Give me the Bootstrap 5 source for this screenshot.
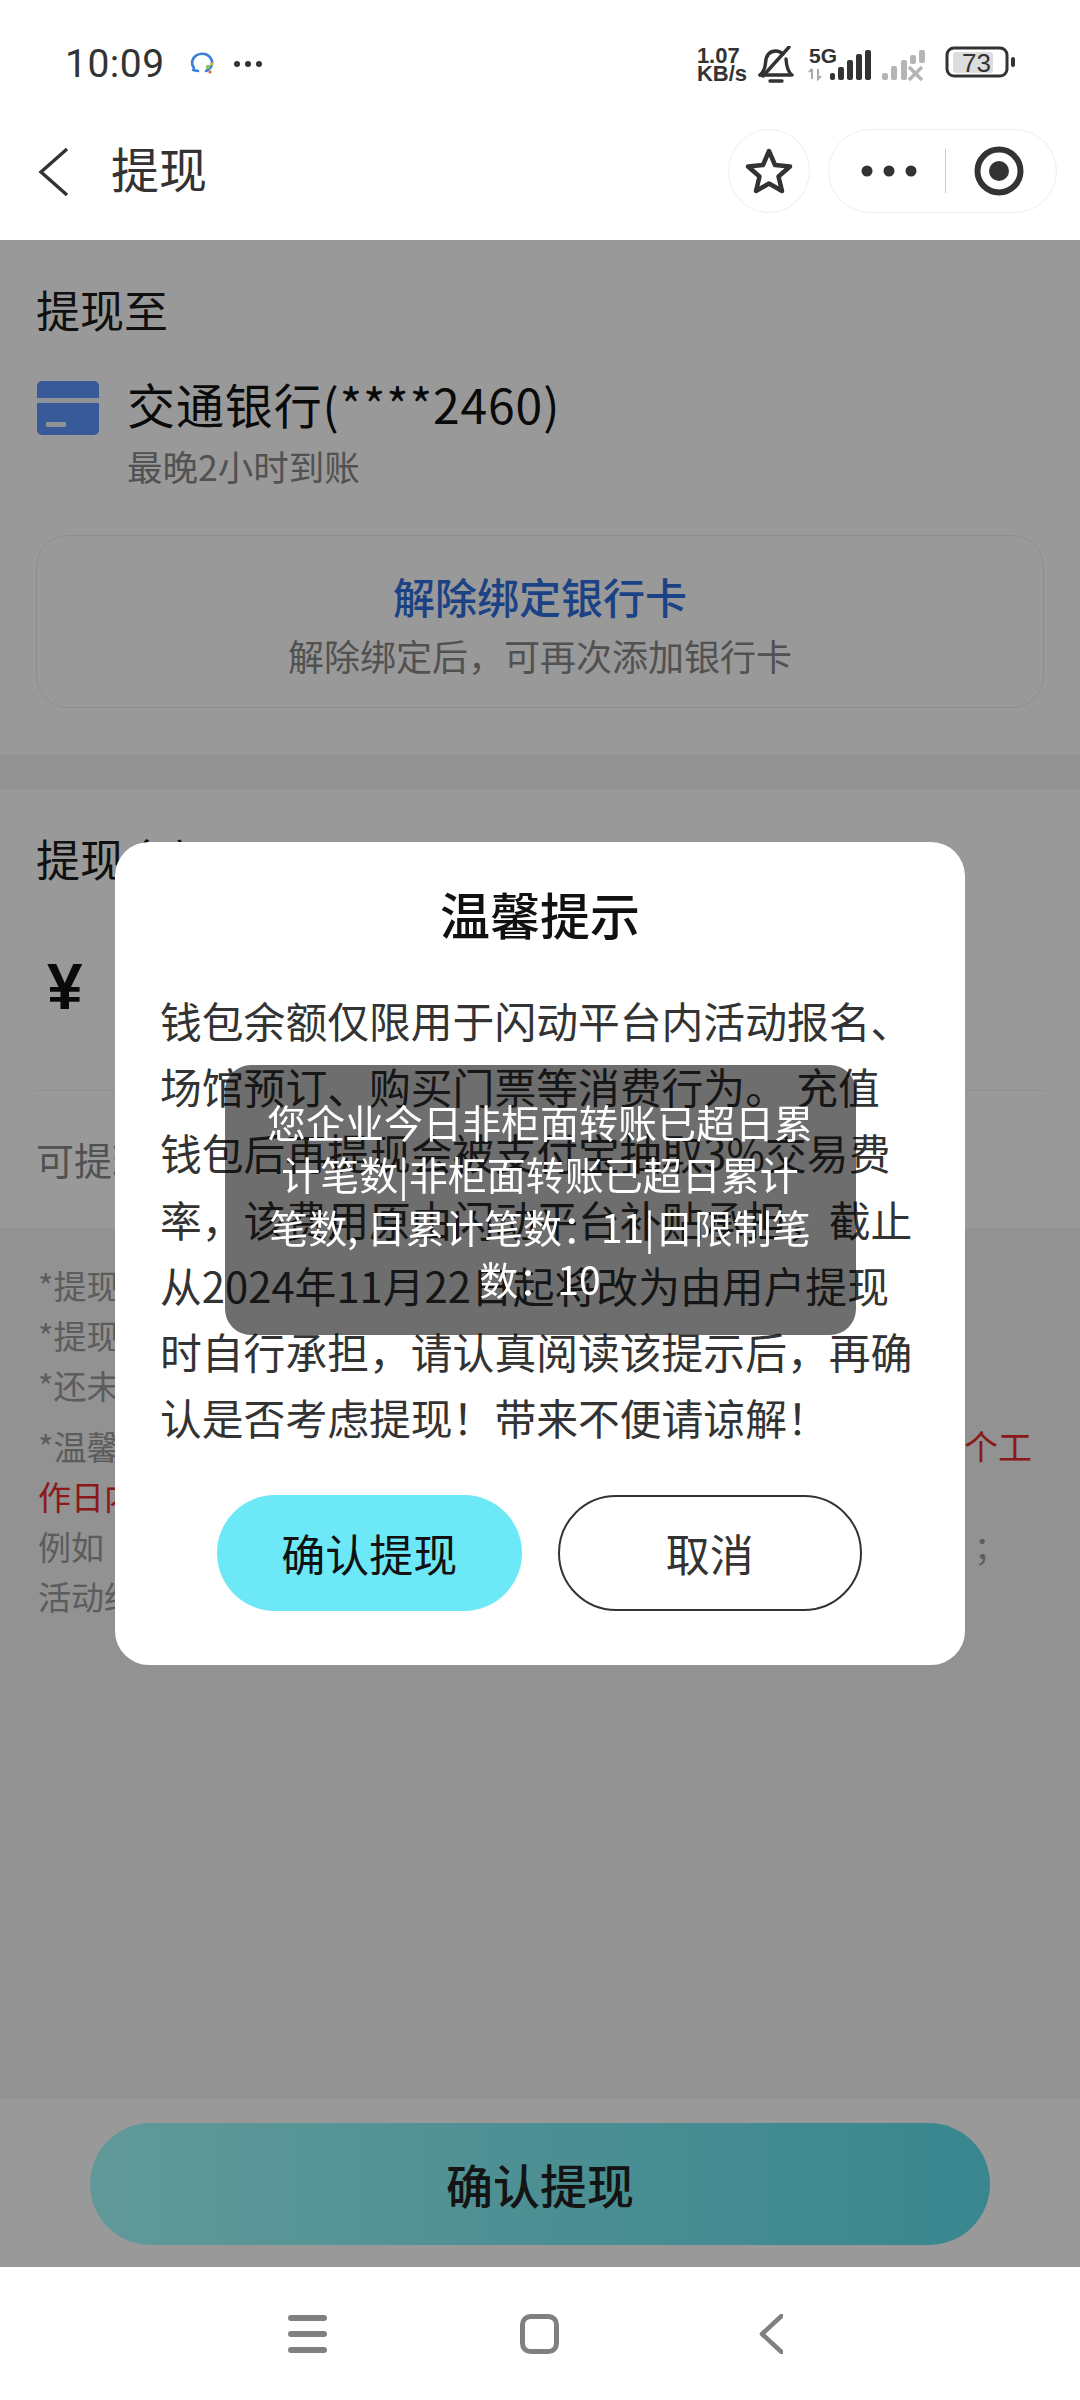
<!DOCTYPE html>
<html lang="zh-CN">
<head>
<meta charset="utf-8">
<link href="https://cdn.jsdelivr.net/npm/bootstrap@5.3.0/dist/css/bootstrap.min.css" rel="stylesheet">
<style>
html,body{margin:0;height:2400px;width:1080px;overflow:hidden;}
body{font-family:"Noto Sans CJK SC","Noto Sans",sans-serif;background:#fff;color:#333;}
.phone{width:1080px;height:2400px;position:relative;}
.status-row{height:80px;padding:46px 65px 0 65px;}
.clock{font-family:Roboto,"Noto Sans",sans-serif;font-size:39px;line-height:36px;color:#333;letter-spacing:.5px;}
.more-dots{margin-top:14px;}
.speed{font-family:"Liberation Sans",sans-serif;font-weight:700;font-size:22px;line-height:18px;color:#333;text-align:left;margin:1px 11px 0 0;}
.bell-mark{margin-right:14px;}
.net-a{margin-right:8px;}
.net-b{margin-right:20px;}
.svg-label{font-family:"Liberation Sans",sans-serif;}
.title-row{height:160px;padding:49px 23px 0 38px;align-items:flex-start;}
.back-mark{margin-top:18px;}
.page-title{font-size:48px;line-height:60px;margin:8px 0 0 42px;color:#333;}
.star-pill{width:82px;height:84px;border:1.5px solid #eee;border-radius:50%;margin-right:18px;}
.menu-pill{width:229px;height:84px;border:1.5px solid #eee;border-radius:42px;padding:0 32px 0 32px;}
.pill-rule{width:1px;height:44px;background:#ccc;}
.main-area{height:2027px;background:#f3f3f3;position:relative;}
.top-sec{background:#fff;height:515px;padding:40px 36px 0;}
.amount-sec{background:#fff;height:438px;padding:39px 36px 0;margin-top:35px;}
.sec-head{font-size:44px;line-height:58px;color:#1c1c1c;}
.bank-row{margin-top:35px;}
.card-mark{margin-top:8px;margin-right:27px;flex:none;}
.bank-name{font-size:48px;line-height:60px;color:#111;letter-spacing:.9px;}
.bank-sub{font-size:35.500px;line-height:48px;color:#888;margin-top:9px;}
.unbind{height:173px;border:1.5px solid #ececec;border-radius:32px;margin-top:45px;padding-top:30px;}
.unbind-a{font-size:42px;line-height:60px;font-weight:500;color:#2f6fe0;}
.unbind-b{font-size:36px;line-height:50px;color:#888;margin-top:4px;}
.yen{font-family:"Liberation Sans",sans-serif;font-size:64px;font-weight:700;line-height:70px;color:#111;margin:65px 0 0 11px;}
.amt-rule{height:1px;background:#eee;margin-top:68px;}
.avail{font-size:38px;line-height:54px;color:#888;margin-top:41px;}
.notes{padding:32px 38px 0;font-size:33px;line-height:50px;color:#9a9a9a;}
.note-gap{margin-top:11px;}
.red-note{color:#e62a2a;}
.red-end{margin-right:10px;font-size:34px;}
.semi-end{margin-right:35px;}
.foot-bar{position:absolute;left:0;right:0;bottom:0;height:169px;background:#fff;padding:25px 90px 0;}
.foot-btn{height:122px;border-radius:61px;background:linear-gradient(90deg,#a2ffff,#5ee0ee);font-size:47px;font-weight:500;color:#222;}
.veil{position:absolute;inset:0;background:rgba(0,0,0,.4);}
.dialog{width:850px;height:823px;background:#fff;border-radius:34px;padding:36px 45px 0;}
.dialog-title{font-size:50px;line-height:70px;font-weight:500;color:#111;text-align:center;}
.dialog-text{font-size:41.800px;line-height:66.200px;color:#333;margin-top:39px;white-space:nowrap;}
.dlg-actions{margin-top:45px;padding:0 58px 0 57px;gap:36px;}
.btn-ok,.btn-no{width:305px;height:116px;border-radius:58px;font-size:44px;}
.btn-ok{background:#6ce8f7;color:#111;}
.btn-no{background:#fff;border:2px solid #333;color:#333;}
.toast-layer{position:fixed;inset:0;pointer-events:none;}
.toast-box{width:631px;height:270px;border-radius:26px;background:rgba(0,0,0,.57);color:#fff;font-size:39px;line-height:52.300px;text-align:center;padding:30px 0 0;white-space:nowrap;}
.sys-nav{height:133px;background:#fff;padding-right:9px;}
.nav-home{margin:0 200px 0 193px;}
</style>
</head>
<body>
<div class="phone d-flex flex-column">
  <div class="status-row d-flex justify-content-between">
    <div class="d-flex align-items-start">
      <span class="clock">10:09</span>
      <svg width="28" height="26" viewBox="0 0 28 26" class="ms-4 mt-1" fill="none"><path d="M5 18a10 9 0 1 1 12 3" stroke="#3b82d6" stroke-width="2.600" stroke-linecap="round"/><path d="M4 20l5 1" stroke="#3b82d6" stroke-width="2.600" stroke-linecap="round"/><circle cx="19" cy="17" r="2.200" fill="#8ac24a"/><circle cx="23" cy="14" r="1.600" fill="#f0b429"/><circle cx="21" cy="22" r="1.600" fill="#e0603a"/></svg>
      <svg width="32" height="8" viewBox="0 0 32 8" class="ms-3 more-dots"><circle cx="4" cy="4" r="3" fill="#333"/><circle cx="15" cy="4" r="3" fill="#333"/><circle cx="26" cy="4" r="3" fill="#333"/></svg>
    </div>
    <div class="d-flex align-items-start">
      <div class="speed">1.07<br>KB/s</div>
      <svg class="bell-mark" width="36" height="38" viewBox="0 0 36 38" fill="none"><path d="M2 29c4-3 5-6 5.500-12C8 9 12 5 18 5c3 0 5 1 7 3" stroke="#333" stroke-width="3.400" stroke-linecap="round"/><path d="M28 13c.5 8 2 13 6 16H2" stroke="#333" stroke-width="3.400" stroke-linecap="round" stroke-linejoin="round"/><path d="M5 30L31 1" stroke="#333" stroke-width="3.400" stroke-linecap="round"/><path d="M12 35h12" stroke="#333" stroke-width="3.400" stroke-linecap="round"/></svg>
      <svg class="net-a" width="65" height="36" viewBox="0 0 65 36"><text class="svg-label" x="1" y="17" font-size="21" font-weight="700" fill="#333">5G</text><g stroke="#aaa" stroke-width="2" fill="none"><path d="M4 23v10M1 26l3-3"/><path d="M10 23v10l3-3"/></g><rect x="22" y="27" width="5" height="7" rx="2" fill="#333"/><rect x="30" y="21" width="6" height="13" rx="2" fill="#333"/><rect x="39" y="14" width="6" height="20" rx="2" fill="#333"/><rect x="48" y="8" width="6" height="26" rx="2" fill="#333"/><rect x="57" y="4" width="6" height="30" rx="2" fill="#333"/></svg>
      <svg class="net-b" width="44" height="36" viewBox="0 0 44 36" fill="#b5b5b5"><rect x="1" y="27" width="6" height="7" rx="2"/><rect x="10" y="20" width="6" height="14" rx="2"/><rect x="20" y="14" width="6" height="20" rx="2"/><rect x="29" y="9" width="6" height="9" rx="2"/><rect x="38" y="4" width="6" height="13" rx="2"/><path d="M28 21l13 13M41 21L28 34" stroke="#b5b5b5" stroke-width="3.400" fill="none"/></svg>
      <svg width="70" height="32" viewBox="0 0 70 32" fill="none"><rect x="8" y="6" width="40" height="21" rx="3" fill="#ddd"/><rect x="2" y="2" width="60" height="28" rx="7" stroke="#333" stroke-width="3"/><text class="svg-label" x="17" y="26" font-size="26" fill="#333">73</text><rect x="66" y="11" width="4" height="10" rx="2" fill="#333"/></svg>
    </div>
  </div>
  <div class="title-row d-flex">
    <svg class="back-mark" width="31" height="50" viewBox="0 0 31 50" fill="none"><path d="M29 2L3 25l26 23" stroke="#333" stroke-width="3.400"/></svg>
    <span class="page-title flex-grow-1">提现</span>
    <div class="star-pill d-flex align-items-center justify-content-center">
      <svg width="48" height="48" viewBox="0 0 48 48" fill="none"><path d="M24 4l6 14 15 1.500-11.500 10L37 44 24 36.500 11 44l3.500-14.500L3 19.500 18 18z" stroke="#333" stroke-width="4.500" stroke-linejoin="round"/></svg>
    </div>
    <div class="menu-pill d-flex align-items-center justify-content-between">
      <svg width="56" height="12" viewBox="0 0 56 12"><circle cx="6" cy="6" r="5.500" fill="#333"/><circle cx="28" cy="6" r="5.500" fill="#333"/><circle cx="50" cy="6" r="5.500" fill="#333"/></svg>
      <span class="pill-rule"></span>
      <svg width="50" height="50" viewBox="0 0 50 50" fill="none"><circle cx="25" cy="25" r="21.500" stroke="#333" stroke-width="6"/><circle cx="25" cy="25" r="10" fill="#333"/></svg>
    </div>
  </div>
  <div class="main-area">
    <section class="top-sec">
      <div class="sec-head">提现至</div>
      <div class="d-flex bank-row">
        <svg class="card-mark" width="64" height="54" viewBox="0 0 64 54"><rect x="1" width="62" height="54" rx="5" fill="#6096ff"/><rect x="1" y="17" width="62" height="5" fill="#eef4ff"/><rect x="10" y="41" width="20" height="5" rx="1" fill="#eef4ff"/></svg>
        <div>
          <div class="bank-name">交通银行(****2460)</div>
          <div class="bank-sub">最晚2小时到账</div>
        </div>
      </div>
      <div class="unbind text-center">
        <div class="unbind-a">解除绑定银行卡</div>
        <div class="unbind-b">解除绑定后，可再次添加银行卡</div>
      </div>
    </section>
    <section class="amount-sec">
      <div class="sec-head">提现金额</div>
      <div class="yen">¥</div>
      <div class="amt-rule"></div>
      <div class="avail">可提现余额</div>
    </section>
    <section class="notes">
      <div>*提现</div>
      <div>*提现</div>
      <div>*还未</div>
      <div class="d-flex justify-content-between note-gap"><span>*温馨</span><span class="red-note red-end">个工</span></div>
      <div class="red-note">作日内</div>
      <div class="d-flex justify-content-between"><span>例如</span><span class="semi-end">；</span></div>
      <div>活动结束</div>
    </section>
    <div class="foot-bar"><div class="foot-btn d-flex align-items-center justify-content-center">确认提现</div></div>
    <div class="veil d-flex align-items-center justify-content-center">
      <div class="dialog">
        <div class="dialog-title">温馨提示</div>
        <div class="dialog-text">钱包余额仅限用于闪动平台内活动报名、<br>场馆预订、购买门票等消费行为。 充值<br>钱包后再提现会被支付宝抽取3%交易费<br>率，该费用原由闪动平台补贴承担，截止<br>从2024年11月22日起将改为由用户提现<br>时自行承担，请认真阅读该提示后，再确<br>认是否考虑提现！带来不便请谅解！</div>
        <div class="dlg-actions d-flex">
          <button type="button" class="btn btn-ok d-flex align-items-center justify-content-center">确认提现</button>
          <button type="button" class="btn btn-no d-flex align-items-center justify-content-center">取消</button>
        </div>
      </div>
    </div>
  </div>
  <div class="sys-nav d-flex align-items-center justify-content-center">
    <svg width="39" height="38" viewBox="0 0 39 38" fill="#808080"><rect y="0" width="39" height="6" rx="3"/><rect y="16" width="39" height="6" rx="3"/><rect y="32" width="39" height="6" rx="3"/></svg>
    <svg class="nav-home" width="39" height="40" viewBox="0 0 39 40" fill="none"><rect x="2.500" y="2.500" width="34" height="35" rx="8" stroke="#808080" stroke-width="5"/></svg>
    <svg width="24" height="40" viewBox="0 0 24 40" fill="none"><path d="M22.500 2L3 20l19.500 18" stroke="#808080" stroke-width="4.500" stroke-linecap="round" stroke-linejoin="round"/></svg>
  </div>
  <div class="toast-layer d-flex align-items-center justify-content-center">
    <div class="toast-box">您企业今日非柜面转账已超日累<br>计笔数|非柜面转账已超日累计<br>笔数, 日累计笔数：11|日限制笔<br>数：10</div>
  </div>
</div>
</body>
</html>
